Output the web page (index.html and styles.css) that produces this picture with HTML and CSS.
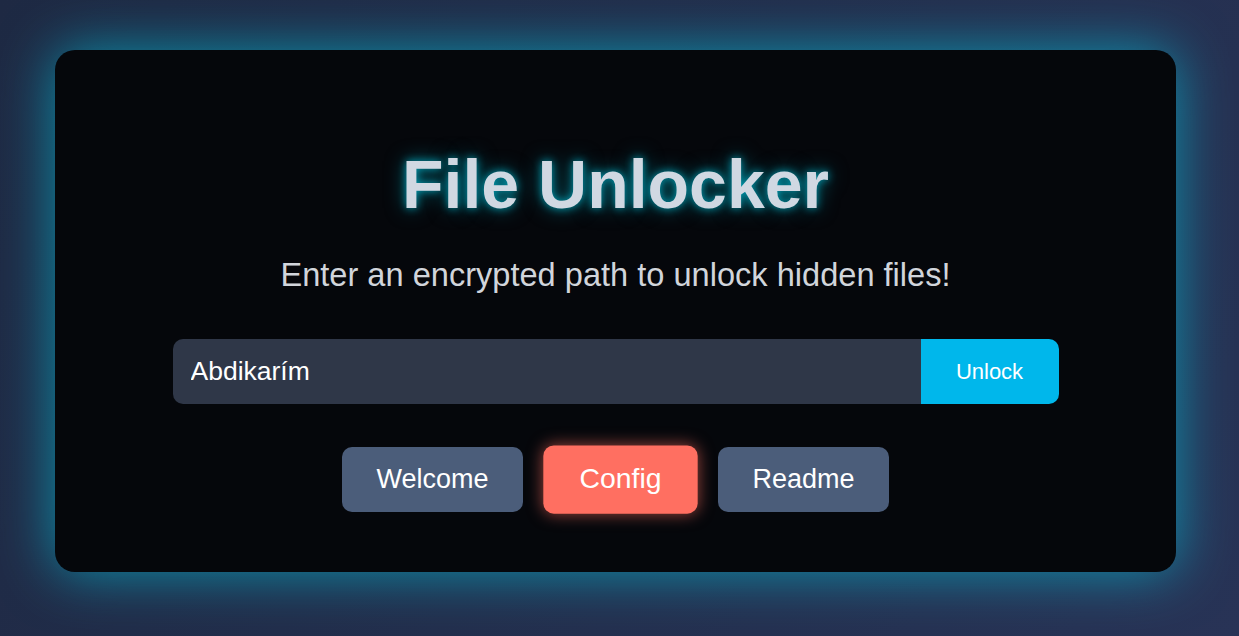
FILE: index.html
```html
<!DOCTYPE html>
<html lang="en">
<head>
    <meta charset="UTF-8">
    <meta name="viewport" content="width=device-width, initial-scale=1.0">
    <title>File Unlocker</title>
    <link rel="stylesheet" href="styles.css">
</head>
<body>
    <main class="card">
        <h1 class="title">File Unlocker</h1>
        <p class="subtitle">Enter an encrypted path to unlock hidden files!</p>

        <form class="unlock-form" onsubmit="return false;">
            <input type="text" class="path-input" value="Abdikarím">
            <button type="submit" class="unlock-btn">Unlock</button>
        </form>

        <div class="file-list">
            <button class="file-btn">Welcome</button>
            <button class="file-btn active">Config</button>
            <button class="file-btn">Readme</button>
        </div>
    </main>
</body>
</html>
```

FILE: styles.css
```css
body {
    font-family: "Liberation Sans", Arial, sans-serif;
    margin: 0;
    padding: 50px 63px 64px 55px;
    min-height: 636px;
    box-sizing: border-box;
    background: linear-gradient(120deg, #1e2943, #283356);
    color: #d1d5db;
}

.card {
    background-color: #05070b;
    border-radius: 20px;
    box-shadow: 0 0 55px rgba(0, 200, 225, 0.65);
    padding: 95px 60px 60px;
    display: flex;
    flex-direction: column;
    align-items: center;
}

.title {
    margin: 0;
    font-size: 68px;
    font-weight: bold;
    color: #d0d8e2;
    text-shadow: 0 0 8px rgba(0, 188, 212, 0.8), 0 0 20px rgba(0, 188, 212, 0.5);
}

.subtitle {
    margin: 33px 0 0;
    font-size: 32.6px;
    color: #d1d5db;
}

.unlock-form {
    display: flex;
    width: 886px;
    margin-top: 45px;
}

.path-input {
    flex: 1;
    height: 65px;
    box-sizing: border-box;
    padding: 0 18px;
    border: none;
    outline: none;
    border-radius: 10px 0 0 10px;
    background-color: #2f3748;
    color: #fff;
    font-family: inherit;
    font-size: 26.5px;
}

.unlock-btn {
    width: 138px;
    border: none;
    border-radius: 0 10px 10px 0;
    background-color: #00b7eb;
    color: #fff;
    font-family: inherit;
    font-size: 22px;
    cursor: pointer;
}

.file-list {
    display: flex;
    gap: 24px;
    margin-top: 43px;
}

.file-btn {
    height: 65px;
    padding: 0 34.5px;
    border: none;
    border-radius: 10px;
    background-color: #4b5d7a;
    color: #fff;
    font-family: inherit;
    font-size: 27px;
    cursor: pointer;
}

.file-btn.active {
    background-color: #ff6f61;
    transform: scale(1.05);
    box-shadow: 0 0 15px rgba(255, 111, 97, 0.6);
}
```
